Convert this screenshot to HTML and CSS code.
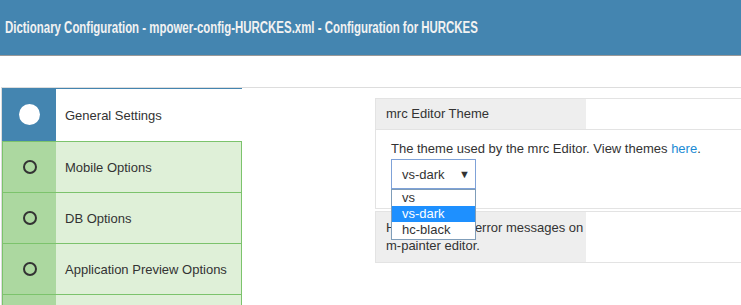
FILE: index.html
```html
<!DOCTYPE html>
<html lang="en">

<head>
    <meta charset="UTF-8">
    <meta name="viewport" content="width=device-width, initial-scale=1.0">
    <title>Dictionary Configuration</title>
    <link rel="stylesheet" href="styles.css">
</head>

<body>
    <div class="header">
        <h1>Dictionary Configuration - mpower-config-HURCKES.xml - Configuration for HURCKES</h1>
    </div>

    <div class="content">
        <div class="side-nav">
            <a href="#" class="nav-item active">
                <span class="icon"><span class="dot"></span></span>
                <span class="label">General Settings</span>
            </a>
            <a href="#" class="nav-item">
                <span class="icon"><span class="ring"></span></span>
                <span class="label">Mobile Options</span>
            </a>
            <a href="#" class="nav-item">
                <span class="icon"><span class="ring"></span></span>
                <span class="label">DB Options</span>
            </a>
            <a href="#" class="nav-item">
                <span class="icon"><span class="ring"></span></span>
                <span class="label">Application Preview Options</span>
            </a>
            <a href="#" class="nav-item">
                <span class="icon"><span class="ring"></span></span>
                <span class="label">Advanced Options</span>
            </a>
        </div>

        <div class="main">
            <div class="panel">
                <div class="panel-head">
                    <div class="panel-label">mrc Editor Theme</div>
                </div>
                <div class="panel-body">
                    <p>The theme used by the mrc Editor. View themes <a href="#">here</a>.</p>
                    <div class="select-wrap">
                        <div class="select">
                            <span>vs-dark</span>
                            <span class="caret">&#9660;</span>
                        </div>
                        <!-- opened list lies over the next panel -->
                        <ul class="options">
                            <li>vs</li>
                            <li class="selected">vs-dark</li>
                            <li>hc-black</li>
                        </ul>
                    </div>
                </div>
            </div>

            <div class="panel">
                <div class="panel-head">
                    <div class="panel-label two-line">Hide validation error messages on m-painter editor.</div>
                </div>
            </div>
        </div>
    </div>
</body>

</html>
```

FILE: styles.css
```css
* {
    padding: 0;
    margin: 0;
    list-style: none;
    box-sizing: border-box;
}

body {
    font-family: "Liberation Sans", Arial, sans-serif;
    font-size: 13px;
    color: #333;
    overflow: hidden;
}

.header {
    height: 56px;
    background-color: #4485b0;
    border-bottom: 1px solid #999;
    padding-left: 5px;
}

/* 標題字體較窄，用 scaleX 壓縮 */
.header h1 {
    display: inline-block;
    font-size: 16px;
    line-height: 56px;
    color: #f2f2f2;
    white-space: nowrap;
    transform: scaleX(0.715);
    transform-origin: left center;
}

.content {
    display: flex;
    align-items: flex-start;
    margin: 31px 0 0 1px;
    border-top: 1px solid #ddd;
    border-left: 1px solid #ddd;
}

/* 左側選單 */
.side-nav {
    width: 240px;
    flex-shrink: 0;
}

.nav-item {
    display: flex;
    height: 51px;
    background-color: #dff0d8;
    border: 1px solid #7cc36c;
    border-bottom: none;
    color: #333;
    text-decoration: none;
}

.nav-item .icon {
    width: 53px;
    background-color: #acd8a0;
    display: flex;
    justify-content: center;
    align-items: center;
}

.nav-item .label {
    display: flex;
    align-items: center;
    padding-left: 9px;
}

.nav-item .ring {
    width: 14px;
    height: 14px;
    border: 2px solid #333;
    border-radius: 50%;
}

.nav-item.active {
    height: 53px;
    background-color: #fff;
    border: none;
    border-top: 1px solid #4485b0;
}

.nav-item.active .icon {
    width: 54px;
    background-color: #4485b0;
}

.nav-item .dot {
    width: 21px;
    height: 21px;
    border-radius: 50%;
    background-color: #fff;
    margin-top: -2px;
}

/* 右側設定 */
.main {
    flex: 1;
    padding: 10px 0 0 133px;
}

.panel {
    width: 440px;
    border: 1px solid #e3e3e3;
    margin-bottom: 2px;
}

.panel-head {
    display: flex;
    border-bottom: 1px solid #e3e3e3;
}

.panel:last-child .panel-head {
    border-bottom: none;
}

.panel-label {
    width: 210px;
    height: 30px;
    line-height: 30px;
    padding: 0 10px;
    background-color: #eee;
}

.panel-label.two-line {
    height: 50px;
    line-height: 18px;
    padding: 7px 0 7px 10px;
}

.panel-body {
    padding: 10px 15px 19px;
}

.panel-body p {
    line-height: 18px;
}

.panel-body a {
    color: #1a8ad4;
    text-decoration: none;
}

.select-wrap {
    position: relative;
    width: 85px;
    margin-top: 1px;
}

.select {
    height: 30px;
    border: 1px solid #7fa2d8;
    display: flex;
    justify-content: space-between;
    align-items: center;
    padding: 0 5px 0 10px;
}

.select .caret {
    font-size: 11px;
}

.options {
    position: absolute;
    top: 30px;
    left: 0;
    width: 85px;
    background-color: #fff;
    border: 1px solid #7f9db9;
    padding-bottom: 1px;
    z-index: 2;
}

.options li {
    height: 16px;
    line-height: 16px;
    padding-left: 10px;
}

.options li.selected {
    background-color: #1e90ff;
    color: #fff;
}
```
